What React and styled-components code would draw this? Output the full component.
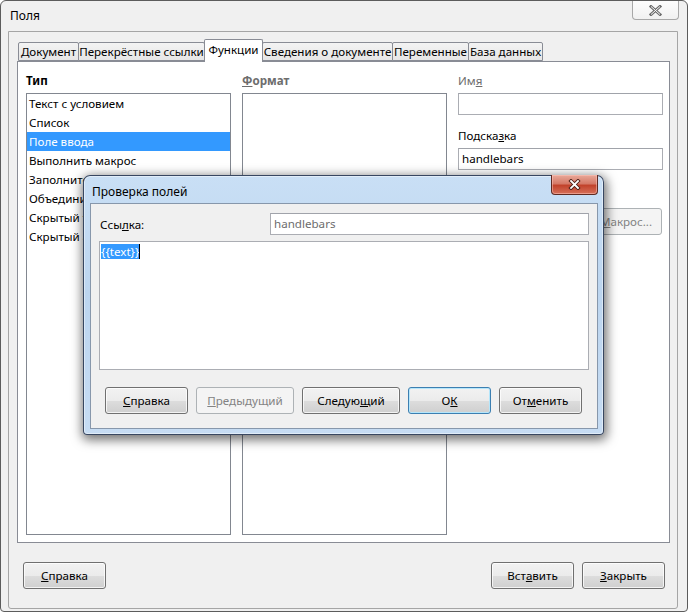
import React from 'react'
import { styled, createGlobalStyle } from 'styled-components'

const GlobalStyle = createGlobalStyle`
  html, body {
    margin: 0;
    padding: 0;
    background: #fff;
  }
  body {
    font-family: "Noto Sans", "Open Sans", sans-serif;
    font-size: 11.6px;
    color: #000;
  }
  * {
    box-sizing: border-box;
  }
`

const Screen = styled.div`
  position: relative;
  width: 689px;
  height: 614px;
`

const Window = styled.div`
  width: 688px;
  height: 612px;
  border: 1px solid #5c5c5c;
  border-radius: 6px 6px 4px 4px;
  background: #f0f0f0;
  display: flex;
  flex-direction: column;
`

const TitleBar = styled.div`
  height: 30px;
  display: flex;
  justify-content: space-between;
  align-items: flex-start;
  padding-left: 9px;
`

const TitleText = styled.span`
  line-height: 30px;
  font-size: 12px;
`

const WinClose = styled.div`
  width: 47px;
  height: 19px;
  margin-right: 8px;
  border: 1px solid #a8a8a8;
  border-top: none;
  border-radius: 0 0 4px 4px;
  background: linear-gradient(to bottom, #fdfdfd, #f1f1f1);
  display: flex;
  align-items: center;
  justify-content: center;
`

const ClientFrame = styled.div`
  flex: 1;
  margin: 0 9px 2px 7px;
  border: 1px solid #a5a5a5;
  border-radius: 0 0 3px 3px;
  display: flex;
  flex-direction: column;
  padding: 7px 7px 0 8px;
`

const TabStrip = styled.div`
  display: flex;
  align-items: flex-end;
  height: 22px;
  padding-left: 1px;
  position: relative;
  z-index: 1;
`

const Tab = styled.div`
  width: ${p => p.$w}px;
  height: ${p => (p.$active ? 23 : 19)}px;
  margin-left: ${p => (p.$first ? 0 : -1)}px;
  margin-bottom: ${p => (p.$active ? -1 : 0)}px;
  border: 1px solid #898c95;
  border-bottom: ${p => (p.$active ? 'none' : '1px solid #898c95')};
  border-radius: 2px 2px 0 0;
  background: ${p => (p.$active ? '#fff' : 'linear-gradient(to bottom, #f3f3f3, #e6e6e6)')};
  position: relative;
  z-index: ${p => (p.$active ? 2 : 1)};
  display: flex;
  align-items: center;
  justify-content: center;
  padding-bottom: ${p => (p.$active ? 3 : 0)}px;
  white-space: nowrap;
`

const TabPage = styled.div`
  height: 482px;
  border: 1px solid #898c95;
  background: #fff;
  display: grid;
  grid-template-columns: 205px 205px 205px;
  column-gap: 11px;
  padding: 11px 7px 7px 8px;
`

const Column = styled.div`
  display: flex;
  flex-direction: column;
  min-height: 0;
`

const Label = styled.div`
  line-height: 16px;
  height: 16px;
  margin-bottom: 4px;
  margin-top: ${p => p.$top || 0}px;
  font-weight: ${p => (p.$bold ? 700 : 400)};
  color: ${p => (p.$disabled ? '#6d6d6d' : '#000')};
  white-space: nowrap;
`

const Key = styled.u`
  text-decoration: underline;
`

const ListBox = styled.div`
  flex: 1;
  border: 1px solid #828790;
  background: #fff;
  overflow: hidden;
`

const ListItem = styled.div`
  height: 19px;
  line-height: 19px;
  padding-left: 2px;
  white-space: nowrap;
  background: ${p => (p.$selected ? '#3399ff' : 'transparent')};
  color: ${p => (p.$selected ? '#fff' : '#000')};
`

const Field = styled.div`
  height: 22px;
  width: ${p => (p.$w ? `${p.$w}px` : 'auto')};
  border: 1px solid #abadb3;
  border-top-color: #a0a3aa;
  background: #fff;
  line-height: 20px;
  padding-left: 3px;
  color: ${p => (p.$disabled ? '#6d6d6d' : '#000')};
  white-space: nowrap;
`

const Button = styled.button`
  width: ${p => p.$w}px;
  height: 27px;
  padding: 0;
  font: inherit;
  color: #000;
  border: 1px solid #707070;
  border-radius: 3px;
  background: linear-gradient(to bottom, #f2f2f2 0%, #ebebeb 50%, #dddddd 51%, #cfcfcf 100%);
  box-shadow: inset 0 0 0 1px rgba(255, 255, 255, 0.75);
  white-space: nowrap;
  align-self: ${p => (p.$end ? 'flex-end' : 'auto')};
  margin-top: ${p => p.$top || 0}px;
  margin-right: ${p => p.$right || 0}px;

  &:disabled {
    color: #838383;
    border-color: #adb2b5;
    background: #f4f4f4;
    box-shadow: none;
  }
`

const DefaultButton = styled(Button)`
  border-color: #3c7fb1;
  box-shadow: inset 0 0 0 1px #b5e6fb;
`

const BottomBar = styled.div`
  display: flex;
  gap: 8px;
  padding: 19px 5px 0 6px;
`

const Spacer = styled.div`
  flex: 1;
`

const Dialog = styled.div`
  position: absolute;
  left: 83px;
  top: 175px;
  width: 521px;
  height: 260px;
  border: 1px solid rgba(30, 45, 70, 0.85);
  border-radius: 7px 7px 4px 4px;
  background: linear-gradient(to bottom, #c9dff5 0%, #bcd5ef 45%, #c6dcf3 100%);
  box-shadow: 1px 3px 11px 2px rgba(0, 0, 0, 0.55), inset 0 0 0 1px rgba(255, 255, 255, 0.45);
  display: flex;
  flex-direction: column;
  padding: 0 5px 5px 6px;
  z-index: 5;
`

const DialogTitle = styled.div`
  height: 27px;
  display: flex;
  justify-content: space-between;
  align-items: flex-start;
`

const DialogTitleText = styled.span`
  line-height: 27px;
  padding: 2px 0 0 2px;
  font-size: 12px;
`

const RedClose = styled.div`
  width: 47px;
  height: 20px;
  margin-top: -1px;
  border: 1px solid #5e2a22;
  border-top: none;
  border-radius: 0 0 4px 4px;
  background: linear-gradient(to bottom, #e9a999 0%, #d57a68 45%, #c2432c 55%, #d6705a 100%);
  box-shadow: inset 0 0 0 1px rgba(255, 200, 190, 0.5);
  display: flex;
  align-items: center;
  justify-content: center;
`

const DialogClient = styled.div`
  flex: 1;
  border: 1px solid #8797ab;
  background: #f0f0f0;
  display: flex;
  flex-direction: column;
  padding: 9px 8px 14px 8px;
`

const RefRow = styled.div`
  display: flex;
  align-items: center;
  justify-content: space-between;
`

const RefLabel = styled.span`
  padding-left: 1px;
`

const TextArea = styled.div`
  height: 129px;
  margin-top: 6px;
  border: 1px solid #abadb3;
  background: #fff;
  padding: 2px 1px;
  line-height: 15px;
  display: flex;
  align-items: flex-start;
`

const Selection = styled.span`
  background: #3399ff;
  color: #fff;
`

const Caret = styled.span`
  width: 1px;
  height: 15px;
  background: #000;
`

const DialogButtons = styled.div`
  display: flex;
  gap: 8px;
  margin-top: 17px;
  padding-left: 6px;
`

const typeItems = [
  'Текст с условием',
  'Список',
  'Поле ввода',
  'Выполнить макрос',
  'Заполнитель',
  'Объединить символы',
  'Скрытый текст',
  'Скрытый абзац',
]

const tabs = [
  { label: 'Документ', w: 61 },
  { label: 'Перекрёстные ссылки', w: 127 },
  { label: 'Функции', w: 59, active: true },
  { label: 'Сведения о документе', w: 131 },
  { label: 'Переменные', w: 77 },
  { label: 'База данных', w: 75 },
]

const GrayX = () => (
  <svg width="13" height="11" viewBox="0 0 13 11">
    <path d="M2 1.5 L11 9.5 M11 1.5 L2 9.5" stroke="#6c6c6c" strokeWidth="3" strokeLinecap="square" />
    <path d="M2 1.5 L11 9.5 M11 1.5 L2 9.5" stroke="#fafafa" strokeWidth="1" />
  </svg>
)

const WhiteX = () => (
  <svg width="13" height="11" viewBox="0 0 13 11">
    <path d="M3 2 L10 9 M10 2 L3 9" stroke="#4a1e17" strokeWidth="3.6" strokeLinecap="square" />
    <path d="M3 2 L10 9 M10 2 L3 9" stroke="#fff" strokeWidth="1.8" strokeLinecap="square" />
  </svg>
)

const App = () => {
  return (
    <Screen>
      <GlobalStyle />
      <Window>
        <TitleBar>
          <TitleText>Поля</TitleText>
          <WinClose>
            <GrayX />
          </WinClose>
        </TitleBar>
        <ClientFrame>
          <TabStrip>
            {tabs.map((t, i) => (
              <Tab key={t.label} $w={t.w} $active={t.active} $first={i === 0}>
                {t.label}
              </Tab>
            ))}
          </TabStrip>
          <TabPage>
            <Column>
              <Label $bold>Тип</Label>
              <ListBox>
                {typeItems.map(item => (
                  <ListItem key={item} $selected={item === 'Поле ввода'}>
                    {item}
                  </ListItem>
                ))}
              </ListBox>
            </Column>
            <Column>
              <Label $bold $disabled>
                <Key>Ф</Key>ормат
              </Label>
              <ListBox />
            </Column>
            <Column>
              <Label $disabled>
                Им<Key>я</Key>
              </Label>
              <Field />
              <Label $top={13}>
                Подска<Key>з</Key>ка
              </Label>
              <Field>handlebars</Field>
              <Button $w={72} $end $top={38} $right={1} disabled>
                <Key>М</Key>акрос...
              </Button>
            </Column>
          </TabPage>
          <BottomBar>
            <Button $w={83}>
              <Key>С</Key>правка
            </Button>
            <Spacer />
            <Button $w={83}>
              Вст<Key>а</Key>вить
            </Button>
            <Button $w={83}>
              <Key>З</Key>акрыть
            </Button>
          </BottomBar>
        </ClientFrame>
      </Window>

      <Dialog>
        <DialogTitle>
          <DialogTitleText>Проверка полей</DialogTitleText>
          <RedClose>
            <WhiteX />
          </RedClose>
        </DialogTitle>
        <DialogClient>
          <RefRow>
            <RefLabel>
              Ссы<Key>л</Key>ка:
            </RefLabel>
            <Field $w={319} $disabled>
              handlebars
            </Field>
          </RefRow>
          <TextArea>
            <Selection>{'{{text}}'}</Selection>
            <Caret />
          </TextArea>
          <DialogButtons>
            <Button $w={83}>
              <Key>С</Key>правка
            </Button>
            <Button $w={98} disabled>
              <Key>П</Key>редыдущий
            </Button>
            <Button $w={98}>
              Следую<Key>щ</Key>ий
            </Button>
            <DefaultButton $w={83}>
              О<Key>К</Key>
            </DefaultButton>
            <Button $w={83}>
              От<Key>м</Key>енить
            </Button>
          </DialogButtons>
        </DialogClient>
      </Dialog>
    </Screen>
  )
}

export default App
